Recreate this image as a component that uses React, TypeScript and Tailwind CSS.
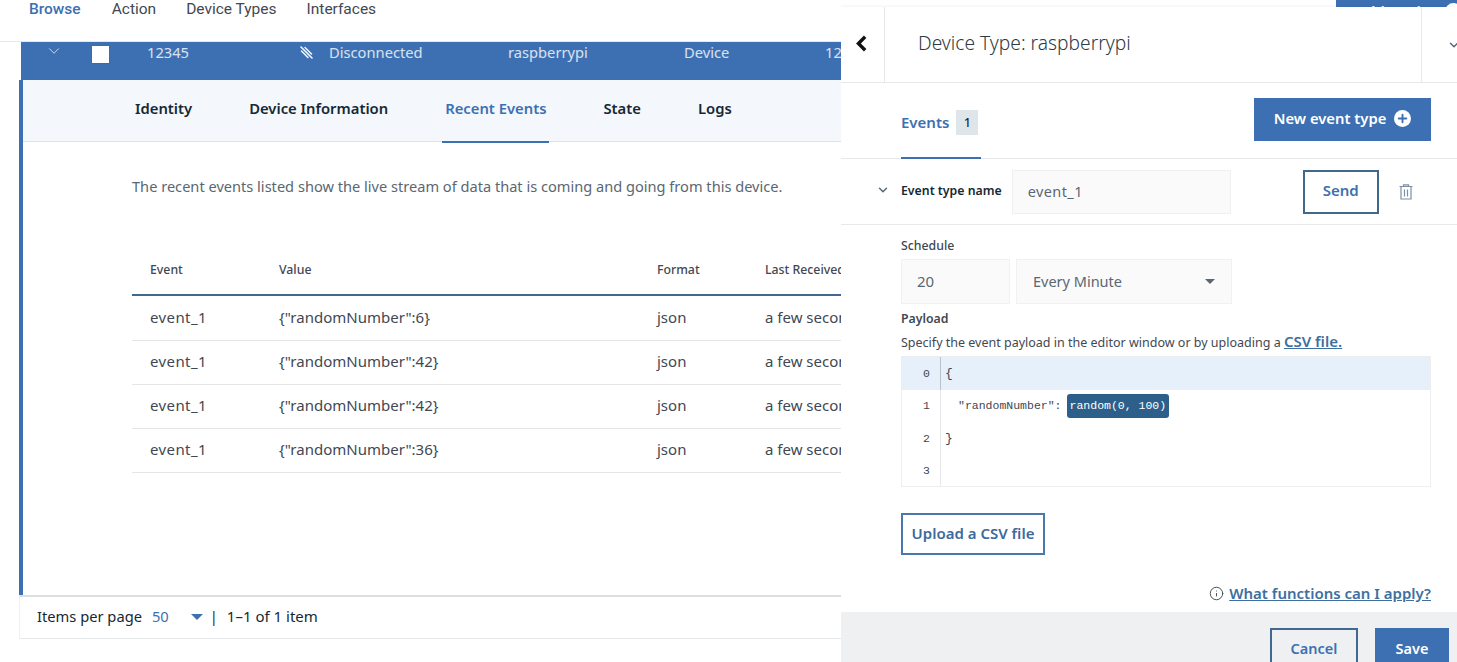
import { ChevronDown, Plus, Info } from "lucide-react";

const BLUE = "text-[#3d70b2]";

const rows = [
  { value: '{"randomNumber":6}', h: "h-[45px]" },
  { value: '{"randomNumber":42}', h: "h-[44px]" },
  { value: '{"randomNumber":42}', h: "h-[44px]" },
  { value: '{"randomNumber":36}', h: "h-[44px]" },
];

const tabs = ["Identity", "Device Information", "Recent Events", "State", "Logs"];

function LeftSide() {
  return (
    <div className="w-[841px] shrink-0 overflow-hidden h-full">
      {/* top nav */}
      <div className="h-[42px] border-b border-[#e6e9ec] flex items-start pl-[29px] gap-[30px] font-['Roboto',sans-serif] text-[15.5px] leading-[18px] text-[#3f4853]">
        <span className={`${BLUE} font-medium`}>Browse</span>
        <span className="ml-px">Action</span>
        <span>Device Types</span>
        <span>Interfaces</span>
      </div>

      <div className="pl-[19px] w-[1100px]">
        {/* selected row */}
        <div className="ml-[2px] h-[38px] bg-[#3d70b2] text-white/80 text-[14.7px] leading-[20px] flex items-start">
          <ChevronDown className="w-[18px] h-[18px] ml-[24px] text-white/80" strokeWidth={1.2} />
          <div className="w-[17px] h-[17px] mt-[4px] bg-white ml-[29px] shadow-[0_0_0_1px_#5a6772]" />
          <span className="ml-[38px] w-[153px]">12345</span>
          <svg viewBox="0 0 13 13" className="w-[13px] h-[13px] mt-[4px]" fill="none" stroke="#f4f7fb" strokeLinecap="round">
            <path d="M1 1 12 12" strokeWidth="1.6" />
            <path d="M5 1.5 11.5 8" strokeWidth="1.5" />
            <path d="M1.5 5 8 11.5" strokeWidth="1.5" />
          </svg>
          <span className="ml-[16px] w-[179px]">Disconnected</span>
          <span className="w-[176px]">raspberrypi</span>
          <span className="w-[141px]">Device</span>
          <span>12</span>
        </div>

        <div className="border-l-[4px] border-[#3d70b2] h-[515px]">
          {/* detail tabs */}
          <div className="h-[62px] bg-[#f4f7fb] border-b border-[#dfe3e6] flex pl-[112px] gap-[57px] text-[14.8px] font-semibold text-[#152934]">
            {tabs.map((t) => (
              <div
                key={t}
                className={
                  t === "Recent Events"
                    ? `h-[63px] pb-[5px] flex items-center -mx-[3px] px-[3px] border-b-2 border-[#3d70b2] ${BLUE}`
                    : "h-[62px] pb-[6px] flex items-center"
                }
              >
                {t}
              </div>
            ))}
          </div>

          <p className="ml-[109px] mt-[35px] text-[14.6px] leading-[20px] -translate-y-[1px] text-[#5a6772]">
            The recent events listed show the live stream of data that is coming and going from this device.
          </p>

          {/* events table */}
          <div className="ml-[109px] mt-[43px]">
            <div className="h-[56px] pt-[6px] border-b-2 border-[#41688f] grid grid-cols-[129px_378px_108px_1fr] pl-[18px] items-center text-[12.3px] font-medium text-[#3f4853]">
              <span>Event</span>
              <span>Value</span>
              <span>Format</span>
              <span>Last Received</span>
            </div>
            {rows.map((r, i) => (
              <div
                key={i}
                className={`${r.h} pb-[2px] border-b border-[#e3e6e9] grid grid-cols-[129px_378px_108px_1fr] pl-[18px] items-center text-[15px] text-[#3f4853]`}
              >
                <span className="tracking-[0.4px]">event_1</span>
                <span>{r.value}</span>
                <span>json</span>
                <span>a few seconds ago</span>
              </div>
            ))}
          </div>
        </div>

        {/* pagination */}
        <div className="h-[44px] pb-[2px] border-t-2 border-b border-l border-t-[#dcdfe2] border-b-[#e6e9ec] border-l-[#eef0f2] flex items-center pl-[17px] text-[14.7px] text-[#152934]">
          <span>Items per page</span>
          <span className={`ml-[10px] ${BLUE}`}>50</span>
          <span className="ml-[22px] w-0 h-0 border-x-[6px] border-x-transparent border-t-[6px] border-t-[#3d70b2]" />
          <span className="ml-[7px]">|</span>
          <span className="ml-[9px] text-[15px]">1–1 of 1 item</span>
        </div>
      </div>
    </div>
  );
}

function RightPanel() {
  return (
    <div className="flex-1 min-w-0 h-full flex flex-col overflow-hidden">
      {/* the page's add button peeking out above the panel */}
      <div className="h-[7px] bg-white flex justify-end overflow-hidden">
        <div className="w-[121px] h-[40px] bg-[#3d70b2] text-white text-[15px] font-semibold leading-[20px] pl-[20px] pt-[1px] whitespace-nowrap flex gap-[8px]">
          Add Device
          <span className="w-[17px] h-[17px] mt-[2px] rounded-full bg-white shrink-0" />
        </div>
      </div>
      <div className="flex-1 border-l border-[#e4e6e8] shadow-[-2px_0_4px_rgba(0,0,0,0.08)] bg-white flex flex-col min-h-0 -ml-px">
        {/* header */}
        <div className="h-[76px] shrink-0 border-b border-[#e6e9ec] flex items-stretch">
          <div className="w-[44px] border-r border-[#e6e9ec] flex items-center justify-center pb-[3px]">
            <svg viewBox="0 0 10 14" className="w-[13px] h-[17px] -ml-[3px]">
              <path d="M8 1.5 2.5 7 8 12.5" fill="none" stroke="#111" strokeWidth="2.8" />
            </svg>
          </div>
          <div className="flex-1 pl-[33px] flex items-center pb-[3px] text-[19.2px] font-light text-[#2d3a44]">
            Device Type: raspberrypi
          </div>
          <div className="w-[36px] border-l border-[#e6e9ec] flex items-center pl-[25px]">
            <ChevronDown className="w-[14px] h-[14px] shrink-0 text-[#5a6772]" strokeWidth={2.5} />
          </div>
        </div>

        {/* events tab + new type */}
        <div className="h-[76px] shrink-0 border-b border-[#e6e9ec] flex pl-[60px] pr-[26px] justify-between">
          <div className="h-[76px] w-[80px] border-b-2 border-[#3d70b2] flex items-start pt-[26px] gap-[7px]">
            <span className={`text-[15px] leading-[26px] font-semibold ${BLUE}`}>Events</span>
            <span className="w-[22px] h-[25px] mt-[1px] bg-[#dfe6e9] flex items-center justify-center text-[12px] font-medium text-[#152934]">
              1
            </span>
          </div>
          <button className="mt-[15px] w-[177px] h-[43px] pb-[2px] bg-[#3d70b2] text-white text-[14.8px] font-semibold flex items-center justify-center gap-[8px]">
            New event type
            <span className="w-[17px] h-[17px] rounded-full bg-white flex items-center justify-center">
              <Plus className="w-[13px] h-[13px] text-[#3d70b2]" strokeWidth={3.5} />
            </span>
          </button>
        </div>

        {/* event row */}
        <div className="h-[66px] shrink-0 border-b border-[#e6e9ec] flex items-center">
          <ChevronDown className="w-[14px] h-[14px] ml-[35px] -mt-[4px] text-[#5a6772]" strokeWidth={2.5} />
          <span className="ml-[11px] text-[12.3px] font-semibold text-[#152934]">Event type name</span>
          <div className="ml-[10px] w-[219px] h-[44px] bg-[#fafafa] border border-[#eff0f1] flex items-center pl-[15px] text-[14.5px] tracking-[0.4px] text-[#5a6772]">
            event_1
          </div>
          <button className={`ml-[72px] w-[76px] h-[44px] pb-[2px] border-2 border-[#41688f] text-[15px] font-semibold ${BLUE}`}>
            Send
          </button>
          <svg viewBox="0 0 14 16" className="ml-[20px] w-[14px] h-[16px]" fill="none" stroke="#7d8fa3" strokeWidth="1.2">
            <path d="M0.5 2.5h13M4.5 2.5V0.8h5v1.7M2 2.5V15h10V2.5M5.5 5.5v7M8.5 5.5v7" />
          </svg>
        </div>

        {/* schedule + payload */}
        <div className="flex-1 min-h-0 pl-[60px] pr-[26px] pt-[13px]">
          <div className="text-[12.3px] leading-[16px] font-medium text-[#3f4853]">Schedule</div>
          <div className="flex gap-[6px] mt-[5px]">
            <div className="w-[109px] h-[45px] bg-[#fafafa] border border-[#f0f1f2] flex items-center pl-[15px] text-[15px] text-[#5a6772]">
              20
            </div>
            <div className="w-[216px] h-[45px] bg-[#fafafa] border border-[#f0f1f2] flex items-center justify-between pl-[16px] pr-[16px] text-[14.5px] text-[#5a6772]">
              Every Minute
              <span className="w-0 h-0 border-x-[5px] border-x-transparent border-t-[5px] border-t-[#5a6772]" />
            </div>
          </div>
          <div className="mt-[7px] text-[12.3px] leading-[16px] font-semibold text-[#3f4853]">Payload</div>
          <div className="mt-[6px] text-[12.5px] leading-[17px] whitespace-nowrap text-[#3f4853]">
            Specify the event payload in the editor window or by uploading a{" "}
            <span className="text-[15px] leading-[17px] font-semibold underline text-[#3d6f9f]">CSV file.</span>
          </div>

          {/* code editor */}
          <div className="mt-[5px] h-[131px] border border-[#eceef0] font-['Liberation_Mono',monospace] text-[11.5px] text-[#3f4853]">
            <div className="h-[33px] bg-[#e5f0fb] flex items-center">
              <span className="w-[39px] border-r border-[#b9c3cd] h-full flex items-center justify-end pr-[10px]">0</span>
              <span className="pl-[4px] text-[13px]">{"{"}</span>
            </div>
            <div className="h-[32px] flex items-center">
              <span className="w-[39px] border-r border-[#e6e9ec] h-full flex items-center justify-end pr-[10px]">1</span>
              <span className="pl-[17px] whitespace-nowrap">"randomNumber":</span>
              <span className="ml-[5px] h-[24px] px-[3px] rounded-[3px] bg-[#2d5f8b] text-white flex items-center whitespace-nowrap">
                random(0, 100)
              </span>
            </div>
            <div className="h-[33px] flex items-center">
              <span className="w-[39px] border-r border-[#e6e9ec] h-full flex items-center justify-end pr-[10px]">2</span>
              <span className="pl-[4px] text-[13px]">{"}"}</span>
            </div>
            <div className="h-[31px] flex items-center">
              <span className="w-[39px] border-r border-[#e6e9ec] h-full flex items-center justify-end pr-[10px]">3</span>
            </div>
          </div>

          <button className="mt-[26px] w-[144px] h-[42px] pb-[2px] border-2 border-[#4a78ad] text-[15px] font-semibold text-[#3d6a9c]">
            Upload a CSV file
          </button>

          <div className="mt-[28px] flex justify-end items-center gap-[5px]">
            <Info className="w-[15px] h-[15px] text-[#3f4853]" strokeWidth={1.5} />
            <span className="text-[15px] leading-[20px] font-semibold underline text-[#3d6f9f]">What functions can I apply?</span>
          </div>
        </div>

        {/* footer */}
        <div className="h-[50px] shrink-0 bg-[#eef0f2] flex justify-end items-start pt-[16px] pr-[8px] gap-[17px]">
          <button className={`w-[88px] h-[43px] shrink-0 border-2 border-[#41688f] pb-[2px] text-[14.5px] font-semibold ${BLUE}`}>
            Cancel
          </button>
          <button className="w-[74px] h-[43px] shrink-0 bg-[#3d70b2] pb-[2px] text-white text-[14.5px] font-semibold">
            Save
          </button>
        </div>
      </div>
    </div>
  );
}

export default function App() {
  return (
    <div className="w-[1457px] h-[662px] overflow-hidden bg-white flex font-['Noto_Sans','Open_Sans',sans-serif]">
      <LeftSide />
      <RightPanel />
    </div>
  );
}
